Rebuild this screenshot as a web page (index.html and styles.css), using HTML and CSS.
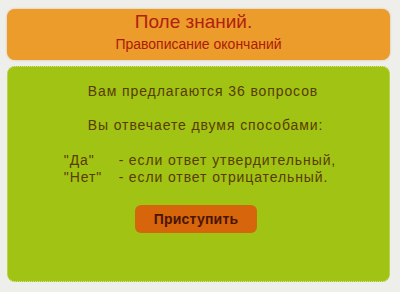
FILE: index.html
```html
<!DOCTYPE html>
<html lang="ru">
<head>
<meta charset="utf-8">
<title>Поле знаний</title>
<link rel="stylesheet" href="styles.css">
</head>
<body>
<div class="page">
  <header class="head">
    <div class="title">Поле знаний.</div>
    <div class="subtitle">Правописание окончаний</div>
  </header>
  <main class="card">
    <p class="line first">Вам предлагаются 36 вопросов</p>
    <p class="line second">Вы отвечаете двумя способами:</p>
    <div class="answers">
      <span>"Да"</span><span>-</span><span>если ответ утвердительный,</span>
      <span>"Нет"</span><span>-</span><span>если ответ отрицательный.</span>
    </div>
    <button class="start" type="button">Приступить</button>
  </main>
</div>
</body>
</html>
```
FILE: styles.css
```css
html, body {
  margin: 0;
  padding: 0;
}
body {
  background: #eeeeea;
  font-family: "Liberation Sans", Arial, sans-serif;
  width: 400px;
  height: 292px;
  overflow: hidden;
}
.page {
  padding: 9px 10px 0 7px;
  display: flex;
  flex-direction: column;
  gap: 6px;
}
.head {
  background: #eb9c2b;
  border-radius: 8px;
  height: 51px;
  box-sizing: border-box;
  padding-top: 2px;
  text-align: center;
  box-shadow: 0 0 2px rgba(200, 120, 20, 0.5);
}
.title {
  color: #b2200f;
  font-size: 19px;
  line-height: 22px;
  padding-right: 10px;
}
.subtitle {
  color: #ad1a08;
  font-size: 14px;
  line-height: 17px;
  margin-top: 3px;
}
.card {
  background: #a0c314;
  border: 1px dotted #d4e38a;
  border-radius: 8px;
  height: 216px;
  box-sizing: border-box;
  padding-top: 16px;
  display: flex;
  flex-direction: column;
  align-items: center;
  color: #5a3b02;
  font-size: 14px;
  line-height: 17px;
  letter-spacing: 0.9px;
}
.line {
  margin: 0;
}
.first {
  padding-left: 9px;
}
.second {
  margin-top: 17px;
  padding-left: 14px;
}
.answers {
  margin-top: 18px;
  display: grid;
  grid-template-columns: 55px 10px auto;
  padding-left: 3px;
}
.start {
  margin-top: 19px;
  width: 122px;
  height: 28px;
  background: #d6650c;
  border: 1px dotted #c8700f;
  border-radius: 6px;
  color: #4a1500;
  font-family: "Liberation Sans", Arial, sans-serif;
  font-weight: bold;
  font-size: 14px;
  letter-spacing: 0.2px;
  padding: 0;
  margin-right: 5px;
}
```
